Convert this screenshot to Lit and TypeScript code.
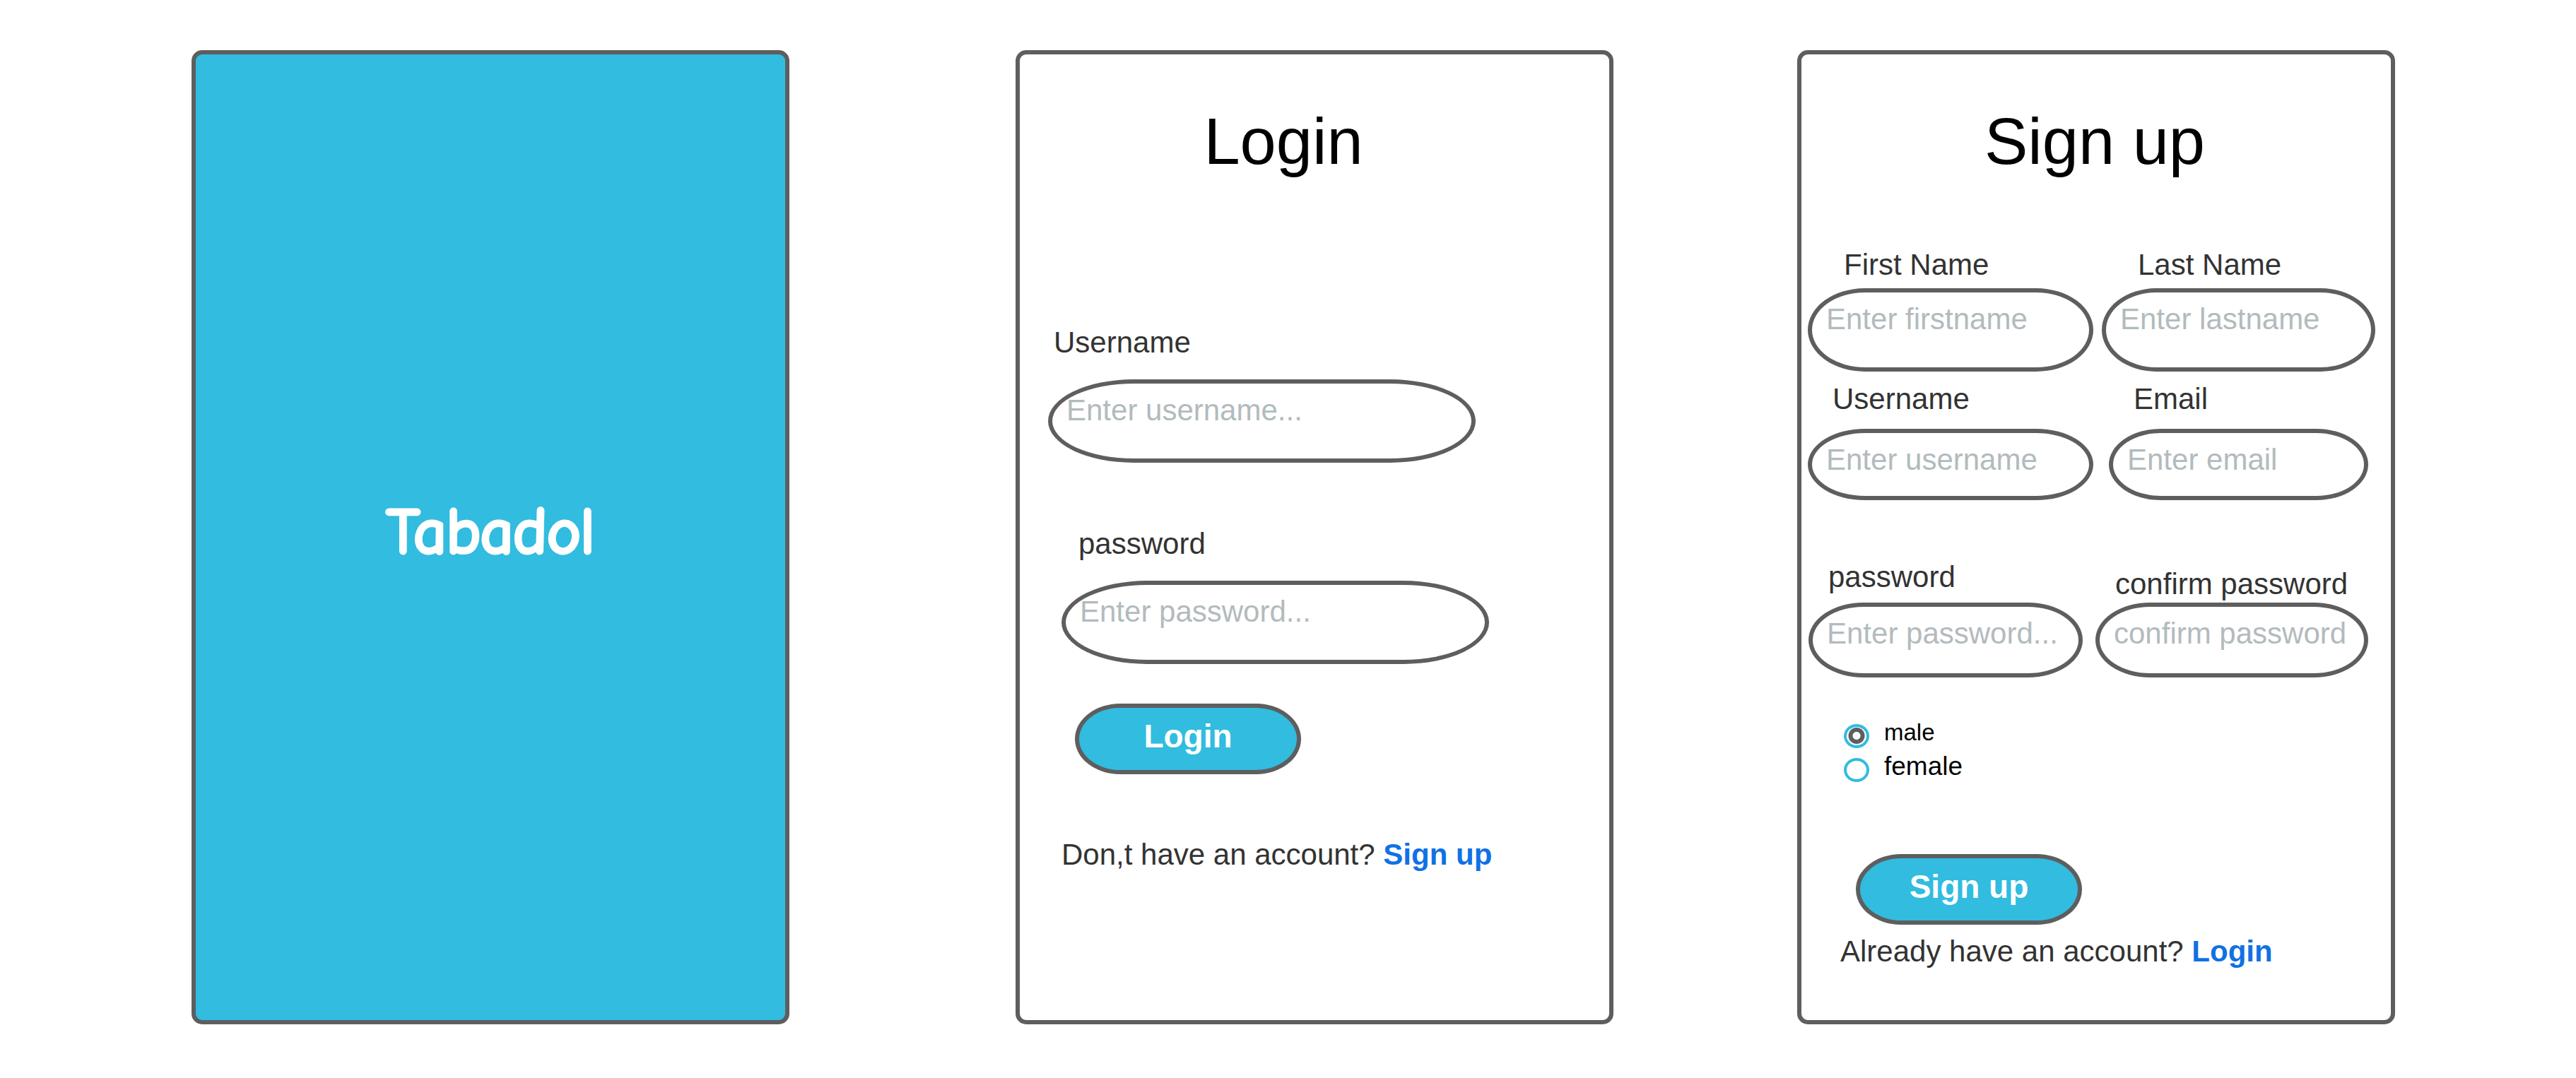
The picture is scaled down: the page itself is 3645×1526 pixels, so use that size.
import { LitElement, html, css } from "lit";
import { customElement, property } from "lit/decorators.js";

const controls = css`
  :host {
    display: block;
    font-family: "Liberation Sans", Arial, sans-serif;
    color: #333333;
  }
  * {
    box-sizing: border-box;
  }
  .title {
    margin: 0;
    font-size: 92px;
    line-height: 104px;
    font-weight: 400;
    text-align: center;
    color: #000000;
  }
  .button {
    display: block;
    width: 320px;
    max-width: 100%;
    margin: 0;
    padding: 14px 0 22px;
    border: 6px solid #5e5e5e;
    border-radius: 20% / 50%;
    background: #31bce0;
    color: #ffffff;
    font: 700 46px / 52px "Liberation Sans", Arial, sans-serif;
    text-align: center;
    cursor: pointer;
  }
  .switch {
    margin: 0;
    font-size: 42px;
    line-height: 48px;
  }
  .link {
    color: #1071e5;
    font-weight: 700;
    text-decoration: none;
  }
`;

@customElement("text-field")
class TextField extends LitElement {
  @property() label = "";
  @property() placeholder = "";
  @property() type = "text";

  static styles = css`
    :host {
      display: flex;
      flex-direction: column;
      min-width: 0;
      gap: var(--label-gap, 28px);
      font-family: "Liberation Sans", Arial, sans-serif;
    }
    .label {
      padding-left: var(--label-indent, 8px);
      font-size: 42px;
      line-height: 48px;
      color: #333333;
      white-space: nowrap;
    }
    .input {
      box-sizing: border-box;
      width: 100%;
      height: var(--box-height, 118px);
      margin: 0;
      padding: 14px 20px calc(var(--box-height, 118px) - 74px);
      border: 6px solid #5e5e5e;
      border-radius: 20% / 50%;
      background: #ffffff;
      color: #333333;
      font: 400 42px / 48px "Liberation Sans", Arial, sans-serif;
      outline: none;
    }
    .input::placeholder {
      color: #b2bbbd;
      opacity: 1;
    }
  `;

  render() {
    return html`
      <label class="label" for="control">${this.label}</label>
      <input
        class="input"
        id="control"
        type=${this.type}
        placeholder=${this.placeholder}
      />
    `;
  }
}

@customElement("splash-screen")
class SplashScreen extends LitElement {
  static styles = css`
    :host {
      display: flex;
      align-items: center;
      justify-content: center;
      background: #31bce0;
    }
    .logo {
      display: block;
      width: 320px;
      height: 120px;
      margin-bottom: 20px;
      overflow: visible;
    }
    .name {
      font-family: "Comic Neue", "Comic Sans MS", "Liberation Sans Narrow",
        "Liberation Sans", sans-serif;
      font-size: 90px;
      fill: #ffffff;
      stroke: #ffffff;
      stroke-width: 5px;
      stroke-linejoin: round;
      text-anchor: middle;
    }
  `;

  render() {
    return html`
      <svg class="logo" viewBox="0 0 320 120" role="img" aria-label="Tabadol">
        <text class="name" x="160" y="92">Tabadol</text>
      </svg>
    `;
  }
}

@customElement("login-screen")
class LoginScreen extends LitElement {
  static styles = [
    controls,
    css`
      .title {
        padding: 71px 88px 0 0;
      }
      .form {
        display: flex;
        flex-direction: column;
        align-items: flex-start;
        padding: 209px 0 0 40px;
      }
      .field {
        width: 605px;
        max-width: 100%;
      }
      .password {
        --label-indent: 24px;
        margin-top: 91px;
      }
      .indent {
        margin-left: 19px;
      }
      .button {
        margin: 56px 0 90px 38px;
      }
    `,
  ];

  render() {
    return html`
      <h1 class="title">Login</h1>
      <form class="form" @submit=${(e: Event) => e.preventDefault()}>
        <text-field
          class="field"
          label="Username"
          placeholder="Enter username..."
        ></text-field>
        <text-field
          class="field indent password"
          label="password"
          type="password"
          placeholder="Enter password..."
        ></text-field>
        <button class="button" type="submit">Login</button>
        <p class="switch indent">
          Don,t have an account? <a class="link" href="#signup">Sign up</a>
        </p>
      </form>
    `;
  }
}

@customElement("signup-screen")
class SignupScreen extends LitElement {
  static styles = [
    controls,
    css`
      .title {
        padding: 71px 4px 0 0;
      }
      .form {
        display: flex;
        flex-direction: column;
        padding: 99px 0 0;
      }
      .row {
        display: grid;
        align-items: end;
      }
      .names {
        --label-gap: 9px;
        --label-indent: 51px;
        grid-template-columns: 404fr 387fr;
        gap: 12px;
        padding: 0 22px 0 9px;
      }
      .contact {
        --label-gap: 18px;
        --label-indent: 35px;
        --box-height: 101px;
        grid-template-columns: 404fr 367fr;
        gap: 22px;
        padding: 15px 32px 0 9px;
      }
      .secrets {
        --label-gap: 12px;
        --label-indent: 28px;
        --box-height: 106px;
        grid-template-columns: 388fr 386fr;
        gap: 18px;
        padding: 85px 32px 0 10px;
      }
      .confirm {
        --label-gap: 2px;
      }
      .options {
        display: flex;
        flex-direction: column;
        gap: 4px;
        padding: 56px 0 0 60px;
      }
      .option {
        display: flex;
        align-items: flex-end;
        gap: 21px;
        color: #000000;
        font-size: 37px;
        line-height: 44px;
      }
      .small {
        font-size: 33px;
      }
      .radio {
        appearance: none;
        width: 36px;
        height: 34px;
        margin: 0;
        border: 4px solid #31bce0;
        border-radius: 50%;
        background: #ffffff;
      }
      .radio:checked {
        background: radial-gradient(
          circle at 50% 48%,
          #ffffff 5px,
          #5e5e5e 6px,
          #5e5e5e 11px,
          #ffffff 12px
        );
      }
      .button {
        margin: 102px 0 14px 77px;
      }
      .switch {
        padding-left: 55px;
      }
    `,
  ];

  render() {
    return html`
      <h1 class="title">Sign up</h1>
      <form class="form" @submit=${(e: Event) => e.preventDefault()}>
        <div class="row names">
          <text-field
            label="First Name"
            placeholder="Enter firstname"
          ></text-field>
          <text-field
            label="Last Name"
            placeholder="Enter lastname"
          ></text-field>
        </div>
        <div class="row contact">
          <text-field
            label="Username"
            placeholder="Enter username"
          ></text-field>
          <text-field
            label="Email"
            type="email"
            placeholder="Enter email"
          ></text-field>
        </div>
        <div class="row secrets">
          <text-field
            label="password"
            type="password"
            placeholder="Enter password..."
          ></text-field>
          <text-field
            class="confirm"
            label="confirm password"
            type="password"
            placeholder="confirm password"
          ></text-field>
        </div>
        <div class="options" role="radiogroup">
          <label class="option small">
            <input
              class="radio"
              type="radio"
              name="gender"
              value="male"
              checked
            />male
          </label>
          <label class="option">
            <input
              class="radio"
              type="radio"
              name="gender"
              value="female"
            />female
          </label>
        </div>
        <button class="button" type="submit">Sign up</button>
        <p class="switch">
          Already have an account? <a class="link" href="#login">Login</a>
        </p>
      </form>
    `;
  }
}

@customElement("app-root")
class AppRoot extends LitElement {
  static styles = css`
    :host {
      display: block;
      background: #ffffff;
    }
    .board {
      box-sizing: border-box;
      display: grid;
      grid-template-columns: 271fr 846fr 320fr 846fr 260fr 846fr 256fr;
      min-height: 100vh;
      padding: 71px 0 76px;
    }
    .screen {
      box-sizing: border-box;
      min-width: 0;
      border: 6px solid #5e5e5e;
      border-radius: 15px;
    }
    .first {
      grid-column: 2;
    }
    .second {
      grid-column: 4;
    }
    .third {
      grid-column: 6;
    }
  `;

  render() {
    return html`
      <main class="board">
        <splash-screen class="screen first"></splash-screen>
        <login-screen class="screen second"></login-screen>
        <signup-screen class="screen third"></signup-screen>
      </main>
    `;
  }
}
